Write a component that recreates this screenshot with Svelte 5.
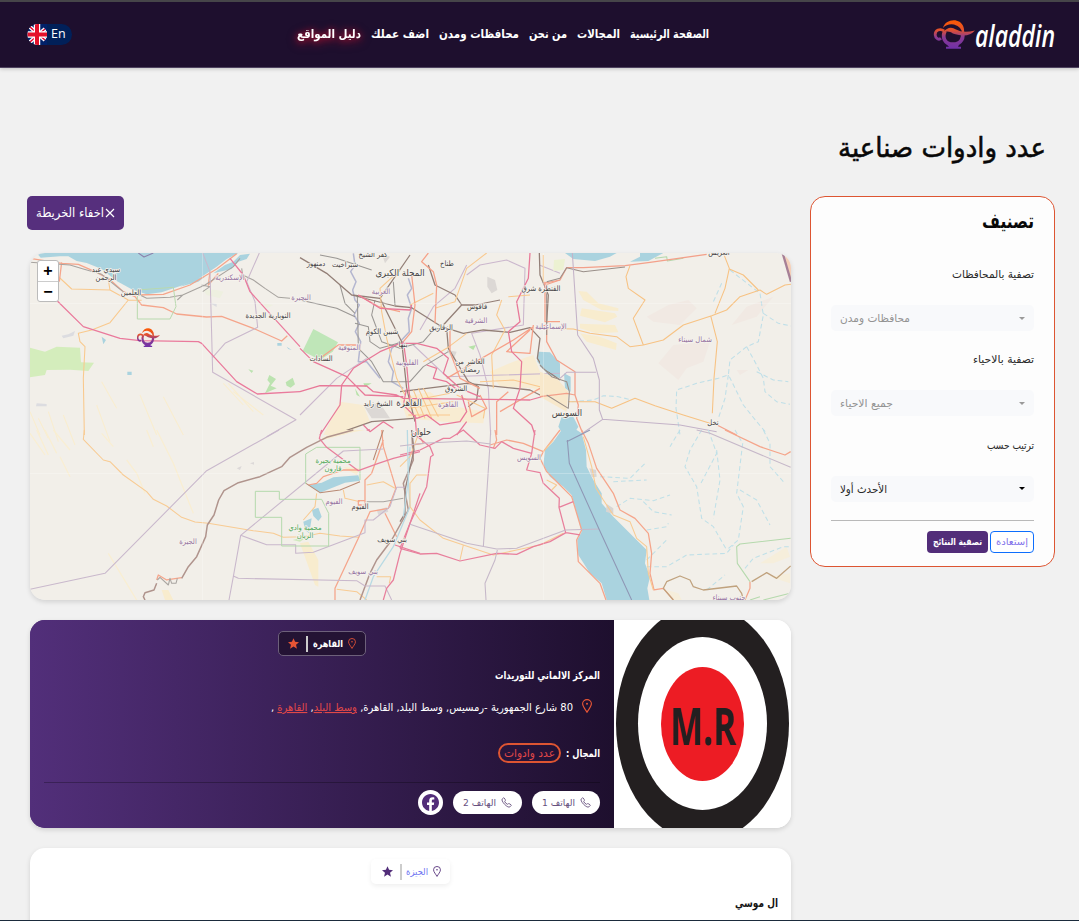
<script>
  const nav = [
    { t: 'الصفحة الرئيسية', w: 79 },
    { t: 'المجالات', w: 43 },
    { t: 'من نحن', w: 38 },
    { t: 'محافظات ومدن', w: 80 },
    { t: 'اضف عملك', w: 58 },
    { t: 'دليل المواقع', w: 64, active: true }
  ];
  const filters = [
    { label: 'تصفية بالمحافظات', lw: 82, value: 'محافظات ومدن', w: 70, off: true },
    { label: 'تصفية بالاحياء', lw: 61, value: 'جميع الاحياء', w: 53, off: true },
    { label: 'ترتيب حسب', lw: 47, value: 'الأحدث أولا', w: 47, off: false }
  ];
</script>

{#snippet line(text, w, size, weight = 400)}
  <svg class="line" width={w} height={Math.round(size * 1.8)}>
    <text x={w} y={size * 1.25} font-size={size} font-weight={weight} textLength={w} lengthAdjust="spacingAndGlyphs" direction="rtl">{text}</text>
  </svg>
{/snippet}

{#snippet lamp(w)}
  <svg class="lamp" width={w} height={w * 0.7} viewBox="0 0 41 29" preserveAspectRatio="none">
    <defs>
      <linearGradient id="lampfill" gradientUnits="userSpaceOnUse" x1="0" y1="0" x2="0" y2="29">
        <stop offset="0" stop-color="#ff5a00" /><stop offset=".35" stop-color="#e2512e" /><stop offset=".6" stop-color="#8a3a92" /><stop offset="1" stop-color="#7030a8" />
      </linearGradient>
    </defs>
    <g fill="none" stroke="url(#lampfill)">
      <path d="M10 11C6 8 1 10.500 1.200 15C1.500 19 5 20.500 7 18.500" stroke-width="2.800" />
      <path d="M11 11C8 17 10 24.500 19 24.500C28 24.500 30 17 28 12" stroke-width="3.800" />
    </g>
    <g fill="url(#lampfill)">
      <path d="M9 8C11 -1 26 -3 29.500 7Q31 12 29 15.500Q28 6.500 20 4.500Q13 3.500 9 8Z" />
      <path d="M9 12.500Q15 5 22 9.500Q29 13.500 41 10.500Q36 16 29 15.700Q20 15 17 12.500Q13 10.500 9 12.500Z" />
      <path d="M13 25H25L24 27H27V29H12V27H15Z" />
    </g>
  </svg>
{/snippet}

{#snippet pin(w)}
  <svg class="pin" width={w} height={w * 1.4} viewBox="0 0 10 14" fill="none" stroke="currentColor">
    <path d="M5 13.300C3.500 10.500 .6 7.500 .6 4.800A4.400 4.200 0 0 1 9.400 4.800C9.400 7.500 6.500 10.500 5 13.300Z" stroke-width="1.100" />
    <circle cx="5" cy="4.800" r="1" fill="currentColor" stroke="none" />
  </svg>
{/snippet}

{#snippet star()}
  <svg class="star" width="11" height="11" viewBox="0 0 16 16" fill="currentColor">
    <path d="M8 .3L10.300 5.500L16 6L11.700 9.800L13 15.500L8 12.500L3 15.500L4.300 9.800L0 6L5.700 5.500Z" />
  </svg>
{/snippet}

{#snippet phone()}
  <svg width="11" height="11" viewBox="0 0 16 16" fill="none" stroke="currentColor" stroke-width="1.300">
    <path d="M3.600 1.300L1.700 3Q.4 5 5.200 10.600Q10.700 16 13 14.300L14.800 12.500Q15.200 11.800 14.500 11.300L12 9.700Q11.400 9.400 10.900 9.700L9.400 10.600Q6.500 9.200 5.400 6.600L6.400 5Q6.600 4.500 6.300 4L4.700 1.500Q4.200 .8 3.600 1.300Z" />
  </svg>
{/snippet}

<div class="page" dir="rtl">
  <header>
    <div class="brand">
      <svg width="80" height="38" viewBox="0 0 80 38">
        <text x="0" y="31" textLength="80" lengthAdjust="spacingAndGlyphs" direction="ltr">aladdin</text>
      </svg>
      {@render lamp(41)}
    </div>
    <nav>
      {#each nav as n}
        <a class:active={n.active}>{@render line(n.t, n.w, 12, 700)}</a>
      {/each}
    </nav>
    <button class="lang" dir="ltr">
      <svg width="20" height="21" viewBox="0 0 20 21">
        <path d="M10 0H20V21H10A10 10.500 0 0 1 10 0Z" fill="#012169" />
        <path d="M3 3L18 16M3 18L18 5" stroke="#fff" stroke-width="4" />
        <path d="M3 3L18 16M3 18L18 5" stroke="#e4002b" stroke-width="1.400" />
        <path d="M10 0V21M.5 10.500H20" stroke="#fff" stroke-width="6.500" />
        <path d="M10 0V21M.5 10.500H20" stroke="#e4122b" stroke-width="4" />
      </svg>
      <span>En</span>
    </button>
  </header>

  <h1>{@render line('عدد وادوات صناعية', 208, 27, 400)}</h1>

  <div class="cols">
    <aside>
      <h2>{@render line('تصنيف', 52, 20, 700)}</h2>
      {#each filters as f}
        <div class="filter">
          <label>{@render line(f.label, f.lw, 11)}</label>
          <div class="select" class:off={f.off}>
            <i></i>{@render line(f.value, f.w, 11)}
          </div>
        </div>
      {/each}
      <div class="actions">
        <button class="reset">{@render line('إستعادة', 32, 9.5)}</button>
        <button class="apply">{@render line('تصفية النتائج', 49, 9.5, 700)}</button>
      </div>
    </aside>

    <main>
      <button class="hide">
        <svg width="10" height="10" viewBox="0 0 10 10" stroke="#fff" stroke-width="1.200"><path d="M1 1L9 9M9 1L1 9" /></svg>
        {@render line('اخفاء الخريطة', 68, 12.5)}
      </button>

      <section class="map">
        <svg width="761" height="347" viewBox="30 253 761 347" fill="none" stroke-linejoin="round">
          <rect x="30" y="253" width="761" height="347" fill="#f2efe9" />
          <!-- north-west coast -->
          <g transform="translate(20 245) scale(.33333)">
            <path d="M50 24L62 38L120 34L145 34L170 48L200 54L245 72L290 108L335 133L380 148L425 142L490 120L545 95L590 65L620 42L655 24Z" fill="#aad3df" />
            <path d="M355 24L372 36L400 24" stroke="#8b80ab" stroke-width="4" />
            <path d="M480 125L530 98L555 95L535 110ZM580 85L615 60L640 50L660 30L690 26L680 42L655 50L635 72Z" fill="#aad3df" />
            <path d="M30 308L75 320L110 305L180 308L183 352L222 353L205 378L150 374L80 375L75 390L30 397Z" fill="#d4edbc" />
            <path d="M748 390L768 402L752 422L770 430L735 445L750 415L742 405ZM797 412L818 398L825 418L812 428L800 422ZM685 373L700 377L695 384Z" fill="#bce3b0" />
            <path d="M245 275L258 285L250 298ZM322 380H335V390H322ZM772 294H785V302H772ZM800 305L815 315L805 312Z" fill="#aad3df" />
            <path d="M125 272L145 268L165 258L160 272L130 280ZM300 305L312 312ZM50 475L80 477V484L48 484ZM570 175L590 177V186Z" fill="#dcdce0" />
            <path d="M550 135Q580 130 610 140L600 160L560 150ZM730 175L760 180L740 190Z" fill="#eef0e0" />
            <g stroke="#f9edcf" stroke-width="4">
              <path d="M30 500L60 570M55 520L85 580M85 500L115 590M130 510L165 600M245 410L290 490M360 450L410 570M430 455L490 570M610 415L670 480M625 415L700 500M640 440L730 510M230 480L270 590" />
            </g>
            <path d="M110 90L155 132L270 135L325 165L365 166M325 165L270 233L215 255L175 265L180 290L195 305L190 400L193 570M265 105L270 135" stroke="#f9c98d" stroke-width="4" />
            <path d="M30 40L125 55L175 58L225 80L265 100L310 140L345 155L365 180L430 188L470 207L560 216L605 214L700 250L785 288L802 272M125 52L118 110M350 150L430 148L510 120L590 72L650 26M570 80L565 120L595 85" stroke="#f5a58b" stroke-width="5" />
            <path d="M30 52L150 60L190 72L245 88L290 125L320 148L360 150L380 160L450 157L488 150L472 165M488 150L555 120L640 65L660 40M548 140L570 125L545 120M665 70L668 90L700 105L735 130L775 157L810 160" stroke="#a7a39f" stroke-width="4" />
            <path d="M352 135L460 127L468 185L450 222H352Z" stroke="#b9d9ae" stroke-width="3" />
            <path d="M548 24L570 80L578 382L828 524L740 575M718 24L680 110L705 170L713 247L615 295L578 337" stroke="#cab8cc" stroke-width="4" />
            <path d="M112 168L190 245L300 280L360 287L535 290L545 295L650 410L712 447L840 440M630 40L670 90L690 140L840 305" stroke="#ea7a9c" stroke-width="5" />
          </g>
          <!-- delta and Cairo -->
          <g transform="translate(300 245) scale(.33333)">
            <path d="M562 95L585 105L592 135L575 145L562 125ZM190 480L240 475L270 520L215 520ZM440 315L470 320L460 345ZM245 25L270 35L255 55Z" fill="#dcd8d5" />
            <path d="M8 318L40 252L114 292L98 320L60 345Z" fill="#bfe6b8" />
            <path d="M505 305L528 300L520 315ZM580 308L595 302ZM190 415L215 415L195 426ZM165 430L180 455L170 450Z" fill="#b7e2a9" />
            <path d="M70 570L120 470L190 480L210 530L130 570ZM300 460L390 440L440 480L555 500L550 535L430 530L320 520ZM570 380L640 350L700 330L720 380L780 410V480L700 430L600 425Z" fill="#f8ecd2" />
            <path d="M715 320L750 322L780 355V400L745 390L712 350Z" fill="#aad3df" />
            <g stroke="#b5b7d0" stroke-width="6">
              <path d="M160 25L165 60L152 80L168 110L158 135L165 165L178 180L162 210L178 235L166 260L182 290L175 350L200 350L220 375L240 400M325 100L335 130L322 150L335 190L325 220L328 260L305 285L275 310L265 350L280 380L275 410L310 430" />
            </g>
            <g stroke="#cbb7cd" stroke-width="4">
              <path d="M500 60L465 130L400 185L360 255M500 90L540 60L620 45L675 70L670 240L515 265L540 330L565 430L572 570M780 385L440 395L340 300M0 510L110 400L200 340M780 85L718 60" />
            </g>
            <g stroke="#9a9794" stroke-width="4">
              <path d="M0 165L110 190L165 215M120 120L135 175L165 205M165 235L205 245L210 290L240 310L310 290M172 150L175 310L215 350L250 410L330 410L370 365L445 320M280 110L285 180M60 30L110 40L215 75" />
              <path d="M225 165L215 210L245 290L300 310L370 290L400 255L430 245" />
            </g>
            <g stroke="#937f77" stroke-width="5">
              <path d="M0 38L80 85L155 150L240 160L330 30M240 160L305 290L320 430L345 530M155 150L285 183L335 188L425 245L490 265L550 255L630 262L690 248L720 280L712 340L730 370L780 405M718 24L720 90L745 150L740 235M430 240L485 180L465 150L405 120L385 60M485 180H525L600 165M440 250L445 310L505 410L535 425L530 465L505 485" />
              <path d="M300 440L380 430L500 415L690 435L780 480M340 520L215 530L100 570" />
            </g>
            <g stroke="#f9c88d" stroke-width="4">
              <path d="M300 75L240 130L245 200L260 280L290 400L315 450M405 190L465 170L500 70L560 24M330 180L400 145M500 265L440 310L370 350M605 165L590 210L615 255L575 330L580 430M625 155L690 150M540 410L640 405L720 425L780 470" />
              <path d="M325 440L360 520M340 435L375 520M355 430L395 520M370 430L415 515M320 470L450 445M325 490L460 470M325 510L450 510M470 450L555 490L550 520" />
            </g>
            <g stroke="#f6a188" stroke-width="5">
              <path d="M335 90L345 180L335 260L310 290M385 24L365 50L400 80L410 120L405 235M175 150L235 185L300 200M60 340L115 300L170 300M450 240L450 320L480 400L540 430M690 255L620 320L690 325L700 240M440 400L640 285L700 245M505 470L515 515L560 490L540 450M590 570L590 470L625 440M720 430L600 500M735 120L780 105M735 110L735 230L780 230" />
            </g>
            <g stroke="#e87898" stroke-width="5">
              <path d="M0 440L60 422L200 423L220 440L290 450L310 460L690 465L780 440M0 310L40 350L140 395L195 450L310 455M60 570L120 480L125 420L160 370L240 320L300 295L350 295L410 310L445 340L430 385L480 430L540 455M690 24L685 100L650 170L660 230L625 260L635 320L665 350L660 430L640 490L695 540L705 570M175 150L240 190L330 195L335 180M310 290L320 360L330 470M320 430L310 480L350 520L380 510L420 540L480 530L500 500L485 450M380 360L410 370L400 400L440 410L480 440M345 510L350 570M190 540L210 560L250 530L280 550M500 530L470 570" />
            </g>
          </g>
          <!-- Sinai -->
          <g transform="translate(540 245) scale(.33333)">
            <path d="M75 24L100 42L165 48L210 35L230 24ZM270 50L300 35V24H370L325 48ZM0 320L50 345L55 375L35 385L0 365ZM72 385L92 395V440L75 430ZM65 515L100 515L115 545L100 570H70L55 545Z" fill="#aad3df" />
            <path d="M735 30L753 45V100L740 70Z" fill="#f5cfb8" />
            <path d="M42 45L75 42L70 75L40 78Z" fill="#ecf1d2" />
            <path d="M115 138L140 140L175 175L235 190V198L185 195L130 165ZM125 190L225 205L232 215L195 232L120 212ZM120 236L225 240L235 262L170 265L120 250ZM120 265L180 275L230 295L228 315L140 290Z" fill="#f8ecce" />
            <path d="M320 215L385 180L445 165L470 190L420 240L340 230ZM575 240L620 185L700 155L650 215ZM355 355L400 300L510 290L490 350L440 370L415 405ZM590 375L625 375L600 390Z" fill="#f1e9e3" />
            <path d="M0 380L50 400L85 440L80 500L0 455Z" fill="#f8e8cb" />
            <g stroke="#bfdfe8" stroke-width="4" stroke-dasharray="14 9">
              <path d="M570 75L615 110L660 145L670 210L655 290L620 305L570 345L565 390L535 400L470 415L410 435L408 490L420 570M620 305L650 360L670 400L675 440L710 470L750 478M650 380L700 405L745 410M670 205L715 235L753 243M565 390L555 460L535 520M568 395L610 480L650 530L680 565M545 115L518 175M95 470L160 465L190 452L235 455L275 465" />
            </g>
            <path d="M345 40L380 35L382 48L430 40" stroke="#b4d8ac" stroke-width="4" />
            <path d="M270 62L258 95L265 130L315 165L280 220L310 300L370 285L430 240L515 212L560 195L600 155L660 135L680 148L735 120L753 118M550 24L568 70L555 130L525 205M568 72L610 90L655 135M10 30V110M0 250L100 252L150 265L230 275L270 305L310 300M512 212L532 290L522 400L517 505M85 470L165 470L215 490L285 460L345 482L430 510L517 537" stroke="#f7c283" stroke-width="4" />
            <path d="M10 115L60 105L80 68L130 68L255 62L330 52L500 28M0 245L20 240L20 290L50 345L105 380V450L115 480L110 520L130 570M0 455L80 445L105 450M525 537L590 570" stroke="#f3a08a" stroke-width="5" />
            <path d="M20 145V270M20 110L60 100L80 68L130 80L255 66M0 360L35 395L80 410L88 440L85 490L20 450" stroke="#9a8f89" stroke-width="4" />
            <path d="M97 24L113 270L160 340L178 405V495L188 523L420 540L530 560M60 400L80 382H168M188 523L120 570" stroke="#c4b3c8" stroke-width="4" />
            <path d="M728 24L753 110" stroke="#a78096" stroke-width="7" />
          </g>
          <!-- western desert and Fayoum -->
          <g transform="translate(20 430) scale(.33333)">
            <path d="M865 165L905 158L940 142L1015 136L1020 152L975 158L900 188ZM876 240L895 233L905 260L895 273L880 258ZM850 275L875 265L868 310L855 300Z" fill="#aad3df" />
            <path d="M905 24L960 0H1035L990 8L910 30ZM970 112L1020 115L1010 135ZM425 480L445 480L460 510H435ZM840 340L865 335L895 390L895 470L885 465Z" fill="#f8ecce" />
            <path d="M1070 240L1100 232L1105 245L1075 255ZM650 115L665 108L660 120ZM690 100L702 96V104Z" fill="#dcd8d8" />
            <path d="M818 330L865 318L840 335Z" fill="#cfe9bd" />
            <g stroke="#f9eed2" stroke-width="5">
              <path d="M30 10L75 75M50 0L85 75M75 0L110 70M100 0L150 60M120 80L150 140M245 10L280 50M320 90L350 130M410 0L460 100L520 250M265 370L350 510M350 130L375 190M380 0L400 50" />
            </g>
            <path d="M193 0L190 28L250 90L270 95L310 135L380 185L400 208L440 228L485 262L525 276L565 280L700 302L760 310L790 322L850 320L900 310L960 318L1015 322M890 190L885 230L850 270M970 180L975 205L1020 215M1040 165L1090 155L1125 175M950 478L1010 485L1040 510M1070 440H1112L1108 460" stroke="#f8cb93" stroke-width="4" />
            <path d="M865 165L890 160L910 140L970 120L1015 120M1085 0L1090 50L1128 175L1105 235L1050 245L1015 325L945 475V510M1090 30L1055 130L1035 150L1035 220M1015 212H1035V225H1015ZM1095 250L1130 320M410 450L415 435L440 450L485 443" stroke="#f5a58b" stroke-width="5" />
            <path d="M1090 0L1060 90M858 160L900 188L960 180L1020 155" stroke="#b98a74" stroke-width="4" />
            <path d="M1000 0L920 22L860 52L810 82L785 110L720 140L655 158L612 182L596 210L582 255L562 285L557 320L530 380L505 410L485 445M410 460L402 480L375 488L370 500L375 510M1175 0L1180 90L1150 160L1165 240L1115 330L1070 390L1050 430L1020 510" stroke="#b0948d" stroke-width="6" />
            <path d="M412 450L420 442L445 465L450 445L455 460H468L472 445M1040 215L1090 215L1150 205" stroke="#a9a5a1" stroke-width="4" />
            <path d="M1170 50L1165 150L1170 230L1120 350L1060 440L1035 510" stroke="#b8dae4" stroke-width="5" />
            <path d="M777 0L560 122L255 430L30 478M1090 57L970 63L662 316L640 440L627 510M662 316L740 344H827V370L880 367L1035 308V270H1060L1110 230L1130 172H1155M640 438L655 445L1010 452L1035 468H1095L1115 510" stroke="#c9b8cc" stroke-width="4" />
            <path d="M706 184H778V208H905L926 250V348H785V262H706ZM857 162V72L890 52H1020V150" stroke="#b5d9ad" stroke-width="3" />
            <path d="M905 0L898 25L920 52L1015 122L1075 100L1120 85L1200 65M1090 510L1100 475L1120 450L1140 370L1200 190M1125 345L1200 370M1040 0H1050" stroke="#e87f9c" stroke-width="5" />
          </g>
          <!-- Gulf of Suez -->
          <g transform="translate(400 430) scale(.33333)">
            <path d="M485 0L460 35L435 60L430 105L450 140L490 170L515 195L530 250L545 305L532 330L535 375L570 430L605 460L620 510H748L742 475L750 440L735 400L740 360L700 320L640 260L605 220V190L580 150L560 110L558 60L545 10L530 0Z" fill="#aad3df" />
            <path d="M568 115L588 120L590 140L575 142ZM620 222L640 235V252L618 245Z" fill="#d8d5d3" />
            <path d="M800 480L835 490L845 510H815ZM1080 400L1160 350L1170 380L1120 400ZM1110 440L1170 430V460Z" fill="#f6eedb" />
            <g stroke="#bfe0e8" stroke-width="4" stroke-dasharray="14 9">
              <path d="M840 0L810 50M905 0L870 60L855 110L890 170L905 265L940 290L980 360M925 0L950 70L900 165M950 60L960 150L940 265M1005 0L1028 40L1010 190L1030 230L1015 330L980 360M1020 180L1070 210L1110 285M1090 0L1110 40V110L1150 155M600 140L690 145L735 100M640 155L740 150M650 230L690 205L760 212L810 195M730 215L760 245L815 255M740 300L800 290L805 280M740 410L800 410L860 375L980 370L1000 345M740 390L805 325M1035 415L1060 385L1150 350H1172M920 480L975 435" />
            </g>
            <path d="M480 0L430 65M270 45L320 30L370 40L430 65L420 85L440 125L480 165L515 200L545 300L530 330L535 395L600 460L618 510M545 0L565 40L590 115L640 190L660 240L705 265L745 310L755 370L750 430L762 480L790 475L820 510M975 0L1080 50L1155 75L1172 65M1050 455V475L1035 510M285 0L290 30L280 55M50 0L70 40L35 45" stroke="#f5a58b" stroke-width="5" />
            <path d="M550 20L575 110L588 175L610 210L640 255L690 275L710 325L740 350L745 430L760 480M0 110L30 80L60 0M80 135H50L30 160V230L60 270L130 325L190 345L280 375L350 360L420 345L490 310M190 345L180 390M440 150L470 165L455 180M430 65L460 30" stroke="#f8cb93" stroke-width="4" />
            <path d="M0 355L60 372L110 370L180 393L290 370L350 373L400 350L450 335L498 308L540 315M0 355L30 280L80 170L92 80L100 75L90 50L40 10M0 75L60 60L130 25L150 25L190 0L240 45L285 55L305 35L340 55L395 70L405 0M395 70L380 120L420 128L430 160L478 205L477 232L520 215M477 232L497 308" stroke="#e87f9c" stroke-width="5" />
            <path d="M35 0L42 60L15 180V250L0 275" stroke="#97827c" stroke-width="5" />
            <path d="M22 0L25 150L10 260" stroke="#b8dae4" stroke-width="5" />
            <path d="M272 0L270 42L250 350M0 48L70 40L200 33L272 42M30 283L200 340L290 357L350 355L497 300L597 297M292 360L285 390L255 460L258 510M890 0L930 10L1172 112" stroke="#c6b8c9" stroke-width="4" />
            <path d="M500 35L570 0M502 30L508 100L597 297L695 510" stroke="#8f97b5" stroke-width="4" />
            <path d="M1172 325L1020 342L1010 350L1012 400L1050 455M1090 510L1170 490M1050 510L1080 500" stroke="#b5d9ad" stroke-width="4" />
            <path d="M820 510L790 475L800 455L840 438L870 450L880 470L910 480L1010 468L1025 490L1030 510M1055 455L1100 428L1130 445L1172 408" stroke="#c0a27e" stroke-width="5" />
          </g>
          <path d="M30 303.500H791M30 473.500H791M202.500 253V600M543.500 253V600" stroke="#fff" stroke-width=".5" opacity=".5" />
          <g class="places" fill="#454345" font-size="7.500" text-anchor="middle" stroke="#f7f4ee" stroke-width="1.500" paint-order="stroke">
            <text x="106" y="272">سيدي عبد</text><text x="106" y="280">الرحمن</text>
            <text x="131" y="295">العلمين</text>
            <text x="268" y="318">النوبارية الجديدة</text>
            <text x="316" y="266">دمنهور</text><text x="345" y="267">شبراخيت</text><text x="373" y="257">كفر الشيخ</text>
            <text x="400" y="276" font-size="9.500">المحلة الكبرى</text><text x="447" y="266">طناح</text>
            <text x="541" y="291">القنطرة شرق</text><text x="477" y="309">فاقوس</text><text x="441" y="330">الزقازيق</text>
            <text x="382" y="334">شبين الكوم</text><text x="403" y="347">بنها</text><text x="321" y="361">السادات</text>
            <text x="470" y="364">العاشر من</text><text x="470" y="372">رمضان</text><text x="456" y="391">الشروق</text>
            <text x="378" y="406">الشيخ زايد</text><text x="409" y="406" font-size="9.500">القاهرة</text>
            <text x="421" y="435" font-size="9">حلوان</text><text x="567" y="416" font-size="9.500">السويس</text>
            <text x="713" y="425">نخل</text><text x="360" y="509">الفيوم</text><text x="392" y="542">بني سويف</text><text x="719" y="255">العريش</text>
            <g fill="#9370a0">
              <text x="230" y="280">الإسكندرية</text><text x="301" y="300">البحيرة</text><text x="381" y="294">الغربية</text>
              <text x="476" y="323">الشرقية</text><text x="551" y="329">الإسماعيلية</text><text x="349" y="350">المنوفية</text>
              <text x="407" y="365">القليوبية</text><text x="448" y="407">القاهرة</text><text x="695" y="342">شمال سيناء</text>
              <text x="529" y="460">السويس</text><text x="334" y="504">الفيوم</text><text x="188" y="544">الجيزة</text>
              <text x="363" y="574">بني سويف</text><text x="729" y="600">جنوب سيناء</text>
            </g>
            <g fill="#4ca657">
              <text x="333" y="463">محمية بحيرة</text><text x="333" y="471">قارون</text>
              <text x="305" y="530">محمية وادي</text><text x="305" y="538">الريان</text>
            </g>
          </g>
        </svg>
        <div class="marker">{@render lamp(23)}</div>
        <div class="zoom"><b>+</b><b>−</b></div>
      </section>

      <article class="card dark">
        <svg class="photo" width="177" height="208" viewBox="0 0 177 208">
          <rect width="177" height="208" fill="#fff" />
          <ellipse cx="88.500" cy="103.500" rx="86.500" ry="118" fill="#231f20" />
          <ellipse cx="88.500" cy="103.500" rx="64.500" ry="86.500" fill="#fff" />
          <ellipse cx="88.500" cy="104" rx="41.500" ry="57" fill="#ed1c24" />
          <text x="56" y="125" textLength="66" lengthAdjust="spacingAndGlyphs" direction="ltr">M.R</text>
        </svg>
        <div class="body">
          <div class="chip">{@render pin(8)}{@render line('القاهرة', 30, 9.5, 700)}<i></i>{@render star()}</div>
          <div class="name">{@render line('المركز الالماني للتوريدات', 105, 11, 700)}</div>
          <div class="addr">
            {@render pin(10)}
            <svg class="line" width="302" height="20">
              <text x="302" y="14" font-size="11" textLength="302" lengthAdjust="spacingAndGlyphs" direction="rtl">80 شارع الجمهورية -رمسيس, وسط البلد, القاهرة, <tspan class="link">وسط البلد</tspan>, <tspan class="link">القاهرة</tspan> ,</text>
            </svg>
          </div>
          <div class="field">{@render line('المجال :', 34, 11, 700)}<span>{@render line('عدد وادوات', 51, 11)}</span></div>
          <hr />
          <div class="contacts">
            <a class="tel first">{@render phone()}{@render line('الهاتف 1', 33, 9.5)}</a>
            <a class="tel">{@render phone()}{@render line('الهاتف 2', 33, 9.5)}</a>
            <a class="fb">
              <svg width="17" height="17" viewBox="0 0 16 16" fill="#522d79"><path d="M16 8.050C16 3.600 12.400 0 8 0S0 3.600 0 8.050C0 12.070 2.930 15.400 6.750 16V10.370H4.720V8.050H6.750V6.280C6.750 4.270 7.950 3.160 9.780 3.160C10.660 3.160 11.570 3.310 11.570 3.310V5.280H10.560C9.570 5.280 9.250 5.900 9.250 6.530V8.050H11.470L11.120 10.370H9.250V16C13.080 15.400 16 12.070 16 8.050Z" /></svg>
            </a>
          </div>
        </div>
      </article>

      <article class="card light">
        <div class="chip">{@render pin(8)}{@render line('الجيزة', 22, 9.5)}<i></i>{@render star()}</div>
        <div class="name">{@render line('ال موسي', 43, 11.5, 700)}</div>
      </article>
    </main>
  </div>
</div>

<style>
  :global(body) { background: #f1f1f1; overflow: hidden; }
  * { box-sizing: border-box; }
  .page { width: 1079px; height: 921px; overflow: hidden; background: #f1f1f1; border-bottom: 1px solid #1b2b3c; font-family: "DejaVu Sans Condensed", "DejaVu Sans", sans-serif; }
  button { font-family: inherit; border: 0; padding: 0; margin: 0; }
  svg { display: block; flex: none; }
  .line { overflow: visible; fill: currentColor; }
  header { height: 68px; border-top: 2px solid #464549; border-bottom: 1px solid #4f4360; background: #1e0f2e; color: #fff; display: grid; grid-template-columns: 370px 412px 1fr; align-items: center; box-shadow: 0 1px 4px #0003; }
  .brand { display: flex; align-items: center; padding-right: 24px; }
  .brand svg { overflow: visible; }
  .brand text { font: italic 600 30px "Open Sans", sans-serif; fill: #fff; }
  .brand .lamp { margin: 0 0 0 -1px; }
  nav { display: flex; gap: 10px; margin-top: -2px; }
  .active { filter: drop-shadow(0 0 3px #d01030a0) drop-shadow(0 2px 4px #c0102ca0); }
  .lang { justify-self: end; margin: 0 0 0 27px; width: 45px; height: 21px; border-radius: 11px; background: #012059; color: #fff; display: flex; align-items: center; gap: 4px; font: 400 12.500px "Open Sans", sans-serif; overflow: hidden; }
  .lang span { margin-top: -2px; }
  h1, h2 { margin: 0; }
  h1 { padding: 55px 33px 0 0; height: 128px; color: #080808; }
  h1 .line { stroke: #080808; stroke-width: .5; }
  .cols { display: grid; grid-template-columns: 245px 761px; gap: 19px; padding-right: 24px; align-items: start; }
  aside { height: 371px; border: 1px solid #dd5532; border-radius: 15px; background: #fdfdfd; padding: 6px 20px 0; color: #080808; }
  h2 { height: 51px; }
  .filter { height: 85.330px; padding-top: 10px; color: #292929; }
  .select { margin-top: 21px; height: 26px; padding: 0 9px; border-radius: 5px; background: #f8f9fb; display: flex; justify-content: space-between; align-items: center; }
  .select i { border: 3px solid transparent; border-top-color: #000; border-bottom: 0; }
  .off { color: #939393; }
  .off i { border-top-color: #999; }
  .actions { margin-top: 10px; border-top: 1px solid #b9b9b9; padding-top: 10px; display: flex; gap: 2px; }
  .actions button { height: 22px; border-radius: 4px; display: flex; align-items: center; justify-content: center; }
  .actions .line { margin-top: -1px; }
  .reset { width: 44px; border: 1px solid #0d6efd !important; background: #fff; color: #8070ea; }
  .apply { width: 61px; background: #522d79; color: #fff; }
  .hide { margin: 0 auto 23px -3px; width: 97px; height: 34px; border-radius: 5px; background: #562f7d; color: #fff; display: flex; align-items: center; justify-content: center; gap: 1px; }
  .hide .line { margin-top: -2px; }
  .map { position: relative; height: 347px; border-radius: 15px; overflow: hidden; }
  .map [stroke-width="4"] { stroke-width: 3.200; }
  .map [stroke-width="5"] { stroke-width: 3.800; }
  .map [stroke-width="6"] { stroke-width: 4.500; }
  .map, .card { box-shadow: 0 2px 5px #0002; }
  .marker { position: absolute; left: 107px; top: 75px; }
  .marker .lamp { height: 19px; }
  .zoom { position: absolute; left: 7px; top: 7px; width: 22px; border: 1px solid #bbb; border-radius: 3px; background: #fff; overflow: hidden; }
  .zoom b { display: block; height: 20px; text-align: center; font: 700 16px/20px "Liberation Sans", sans-serif; }
  .zoom b + b { border-top: 1px solid #ccc; }
  .card { margin-top: 20px; border-radius: 15px; overflow: hidden; }
  .dark { height: 208px; display: flex; background: linear-gradient(90deg, #522f7a 50%, #fff 50%); color: #fff; }
  .photo text { font: 700 52px "Open Sans", sans-serif; fill: #231f20; }
  .body { width: 584px; background: linear-gradient(270deg, #1e0f2e, #522f7a); padding: 11px 14px 0 14px; }
  .chip { display: flex; align-items: center; margin: 0 auto; }
  .dark .chip { width: 88px; height: 25px; border: 1px solid #6d607a; border-radius: 5px; background: #241334; padding-right: 9px; }
  .dark .chip .pin, .dark .star, .addr .pin { color: #e85535; }
  .chip .pin { height: 11px; margin-left: 5px; }
  .chip i { width: 2px; height: 16px; background: #ccc; margin: 0 5px 0 7px; }
  .chip .star { margin: 0 0 0 auto; }
  .name { margin-top: 9px; }
  .addr { margin-top: 12px; display: flex; align-items: center; gap: 9px; padding-right: 8px; }
  .addr .pin { margin-top: -3px; }
  .link { fill: #e04848; text-decoration: underline; }
  .field { margin-top: 26px; display: flex; align-items: center; gap: 5px; }
  .field .line { margin-top: -1px; }
  .field span { width: 63px; height: 20px; border: 2px solid #dd5532; border-radius: 10px; color: #e04848; display: flex; align-items: center; justify-content: center; }
  hr { border: 0; border-top: 1px solid #0004; margin: 19px 0 7px; }
  .contacts { display: flex; align-items: center; gap: 10px; }
  .tel { width: 69px; height: 23px; border-radius: 12px; background: #fff; color: #66507e; display: flex; align-items: center; justify-content: center; gap: 5px; }
  .first { width: 68px; }
  .fb { width: 25px; height: 25px; border-radius: 50%; background: #fff; display: grid; place-items: center; }
  .light { height: 120px; background: #fff; padding: 11px 13px; color: #161616; }
  .light .chip { width: 79px; height: 25px; border-radius: 5px; box-shadow: 0 2px 5px #0001; padding-right: 9px; color: #522d79; }
  .light .chip .line { color: #6d72f2; }
  .light .chip i { margin-right: 4px; }
  .light .name { margin-top: 9px; }
</style>
